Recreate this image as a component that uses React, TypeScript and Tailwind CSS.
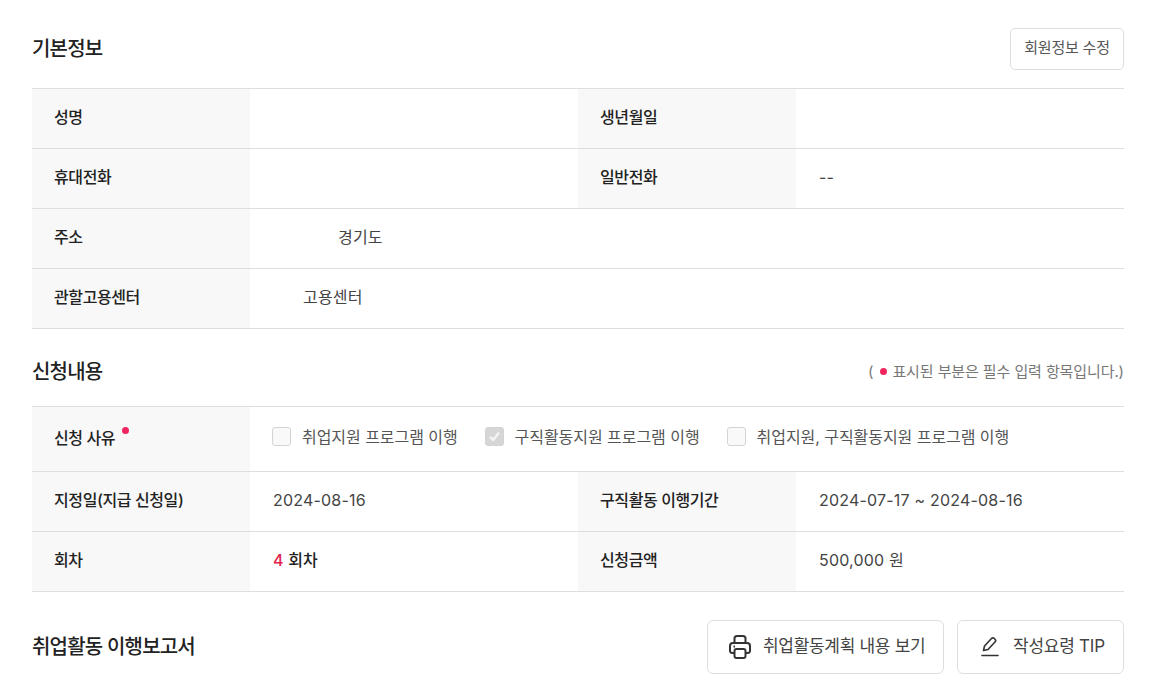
import React from "react";

const font = { fontFamily: '"Inter", "Noto Sans CJK KR", sans-serif' };

function Label({ children }: { children: React.ReactNode }) {
  return (
    <div className="flex w-[218px] shrink-0 items-center bg-[#f8f8f8] pb-[3px] pl-[22px] text-[16px] font-medium tracking-[-0.4px] text-[#222222]">
      {children}
    </div>
  );
}

function Value({ children, wide }: { children?: React.ReactNode; wide?: boolean }) {
  return (
    <div className={`flex items-center pb-[3px] pl-[23px] text-[16px] tracking-[0.2px] text-[#444444] ${wide ? "flex-1" : "w-[328px]"}`}>
      {children}
    </div>
  );
}

function Row({ children, h = "h-[60px]" }: { children: React.ReactNode; h?: string }) {
  return <div className={`flex border-b border-[#dedede] ${h}`}>{children}</div>;
}

function Check({ label, checked }: { label: string; checked?: boolean }) {
  return (
    <div className="flex items-center gap-[11px]">
      <span
        className={`flex h-[19px] w-[19px] items-center justify-center rounded-[3px] border border-[#d4d4d4] ${
          checked ? "bg-[#d6d6d6]" : "bg-[#f9f9f9]"
        }`}
      >
        {checked && (
          <svg width="13" height="13" viewBox="0 0 13 13" fill="none">
            <path d="M2 6.800 5.200 10 11 2.500" stroke="#f4f4f4" strokeWidth="2.400" />
          </svg>
        )}
      </span>
      <span className="text-[16px] tracking-[-0.05px] text-[#555555]">{label}</span>
    </div>
  );
}

function Title({ children }: { children: React.ReactNode }) {
  return <h2 className="text-[20px] font-medium tracking-[-0.8px] text-[#222222]">{children}</h2>;
}

export default function App() {
  return (
    <div className="h-[696px] w-[1162px] overflow-hidden bg-white pl-[32px] pr-[38px]" style={font}>
      <div className="flex h-[88px] items-center justify-between pt-[10px]">
        <Title>기본정보</Title>
        <button className="h-[42px] w-[114px] rounded-[5px] border border-[#dedede] bg-white pb-[1px] text-[15px] tracking-[-0.2px] text-[#555555]">
          회원정보 수정
        </button>
      </div>
      <div className="border-t border-[#dedede]">
        <Row>
          <Label>성명</Label>
          <Value />
          <Label>생년월일</Label>
          <Value wide />
        </Row>
        <Row>
          <Label>휴대전화</Label>
          <Value />
          <Label>일반전화</Label>
          <Value wide>--</Value>
        </Row>
        <Row>
          <Label>주소</Label>
          <Value wide>
            <span className="pl-[65px]">경기도</span>
          </Value>
        </Row>
        <Row>
          <Label>관할고용센터</Label>
          <Value wide>
            <span className="pl-[30px]">고용센터</span>
          </Value>
        </Row>
      </div>
      <div className="flex h-[77px] items-center justify-between pt-[8px]">
        <Title>신청내용</Title>
        <p className="flex items-center pt-[2px] text-[15px] tracking-[-0.1px] text-[#777777]">
          (<span className="ml-[7px] mr-[5px] mb-[3px] h-[7px] w-[7px] rounded-full bg-[#f0245f]" />
          표시된 부분은 필수 입력 항목입니다.)
        </p>
      </div>
      <div className="border-t border-[#dedede]">
        <Row h="h-[65px]">
          <Label>
            <span className="relative">
              신청 사유
              <span className="absolute right-[-14px] top-[1px] h-[7px] w-[7px] rounded-full bg-[#f0245f]" />
            </span>
          </Label>
          <div className="flex flex-1 items-center gap-[27px] pb-[5px] pl-[22px]">
            <Check label="취업지원 프로그램 이행" />
            <Check label="구직활동지원 프로그램 이행" checked />
            <Check label="취업지원, 구직활동지원 프로그램 이행" />
          </div>
        </Row>
        <Row>
          <Label>지정일(지급 신청일)</Label>
          <Value>2024-08-16</Value>
          <Label>구직활동 이행기간</Label>
          <Value wide>2024-07-17 ~ 2024-08-16</Value>
        </Row>
        <Row>
          <Label>회차</Label>
          <Value>
            <span className="font-medium text-[#222222]">
              <span className="text-[#e0244f]">4</span> 회차
            </span>
          </Value>
          <Label>신청금액</Label>
          <Value wide>500,000 원</Value>
        </Row>
      </div>
      <div className="flex items-center justify-between pt-[28px]">
        <Title>취업활동 이행보고서</Title>
        <div className="flex gap-[13px]">
          <button className="flex h-[54px] w-[237px] items-center gap-[11px] rounded-[6px] border border-[#dedede] bg-white pb-[1px] pl-[20px] text-[17px] tracking-[-0.3px] text-[#444444]">
            <svg width="24" height="26" viewBox="0 0 24 26" fill="none" stroke="#333333" strokeWidth="2" strokeLinejoin="round">
              <path d="M6.500 9V4.500A2.500 2.500 0 0 1 9 2h6a2.500 2.500 0 0 1 2.500 2.500V9" />
              <path d="M6.500 19H4.500A2.500 2.500 0 0 1 2 16.500V12a3 3 0 0 1 3-3h14a3 3 0 0 1 3 3v4.500a2.500 2.500 0 0 1-2.500 2.500H17.500" />
              <rect x="6.500" y="15" width="11" height="9" rx="2" />
              <path d="M5.500 12.500h1.500" />
            </svg>
            취업활동계획 내용 보기
          </button>
          <button className="flex h-[54px] w-[167px] items-center gap-[14px] rounded-[6px] border border-[#dedede] bg-white pb-[1px] pl-[23px] text-[17px] tracking-[-0.25px] text-[#444444]">
            <svg width="18" height="21" viewBox="0 0 18 21" fill="none" stroke="#333333" strokeWidth="1.600" strokeLinejoin="round">
              <path d="M2.500 14.500 3.500 10 10.500 2.500a2 2 0 0 1 2.800 0l.700.700a2 2 0 0 1 0 2.800L7 13.500Z" />
              <path d="M1 19.500h16" strokeLinecap="round" />
            </svg>
            작성요령 TIP
          </button>
        </div>
      </div>
    </div>
  );
}
